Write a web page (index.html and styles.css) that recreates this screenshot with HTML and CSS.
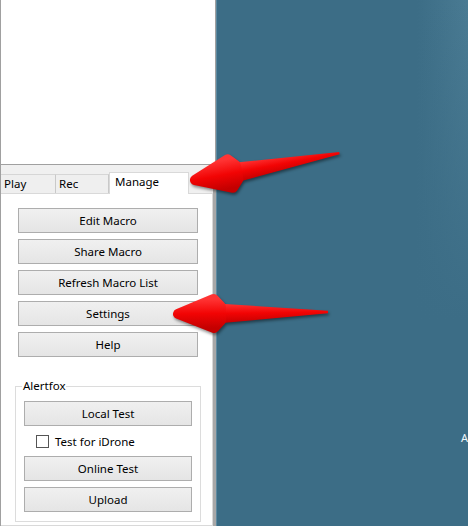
FILE: index.html
```html
<!DOCTYPE html>
<html>
<head>
<meta charset="utf-8">
<link rel="stylesheet" href="styles.css">
</head>
<body>
<div class="app">
  <div class="left">
    <div class="preview"></div>
    <div class="lower">
      <div class="tabs">
        <div class="tab tab-play">Play</div>
        <div class="tab tab-rec">Rec</div>
        <div class="tab tab-active">Manage</div>
      </div>
      <div class="panel">
        <div class="btn-list">
          <div class="btn">Edit Macro</div>
          <div class="btn">Share Macro</div>
          <div class="btn">Refresh Macro List</div>
          <div class="btn">Settings</div>
          <div class="btn">Help</div>
        </div>
        <div class="group">
          <div class="group-label">Alertfox</div>
          <div class="btn btn-inner">Local Test</div>
          <div class="check-row">
            <span class="checkbox"></span>
            <span>Test for iDrone</span>
          </div>
          <div class="btn btn-inner">Online Test</div>
          <div class="btn btn-inner">Upload</div>
        </div>
      </div>
    </div>
  </div>
  <div class="right">
    <span class="cut-text">A</span>
  </div>
</div>
<svg class="arrows" width="468" height="526" viewBox="0 0 468 526">
  <defs>
    <linearGradient id="red" x1="0" y1="0" x2="0" y2="1">
      <stop offset="0" stop-color="#ff3434"/>
      <stop offset="0.5" stop-color="#f20404"/>
      <stop offset="1" stop-color="#c40000"/>
    </linearGradient>
  </defs>
  <g transform="translate(190,181) rotate(-10.57)">
    <path d="M44,-10 L152,-1.2 L152,1.2 L44,10 Z" fill="url(#red)"/>
    <path d="M5,0 L41,-14.5 L48,-7 L48,7 L41,14.5 Z" fill="url(#red)" stroke="url(#red)" stroke-width="10" stroke-linejoin="round"/>
  </g>
  <g transform="translate(173,314) rotate(-0.74)">
    <path d="M44,-10 L155,-1.2 L155,1.2 L44,10 Z" fill="url(#red)"/>
    <path d="M5,0 L41,-14.5 L48,-7 L48,7 L41,14.5 Z" fill="url(#red)" stroke="url(#red)" stroke-width="10" stroke-linejoin="round"/>
  </g>
</svg>
</body>
</html>
```
FILE: styles.css
```css
* { box-sizing: border-box; }
html, body {
  margin: 0;
  padding: 0;
  width: 468px;
  height: 526px;
  overflow: hidden;
}
body {
  font-family: "Noto Sans", "Open Sans", sans-serif;
  font-size: 11.5px;
  color: #000;
  position: relative;
}
.app {
  display: flex;
  width: 468px;
  height: 526px;
}
.left {
  width: 216px;
  flex: none;
  display: flex;
  flex-direction: column;
}
.preview {
  height: 165px;
  background: #fff;
  border-left: 1px solid #a0a0a0;
  border-right: 1px solid #a0a0a0;
  border-bottom: 1px solid #a0a0a0;
}
.lower {
  flex: 1;
  background: #f0f0f0;
  border-left: 1px solid #a0a0a0;
  border-right: 3px solid #a8a8a8;
  padding-top: 7px;
  display: flex;
  flex-direction: column;
}
.tabs {
  display: flex;
  align-items: flex-end;
  height: 21px;
  position: relative;
  z-index: 1;
}
.tab {
  height: 19px;
  background: #efefef;
  border-top: 1px solid #d6d6d6;
  border-right: 1px solid #c9c9c9;
  padding: 1px 0 0 3px;
  line-height: 16px;
}
.tab-play { width: 55px; }
.tab-rec { width: 53px; }
.tab-active {
  width: 80px;
  height: 22px;
  margin-bottom: -1px;
  background: #fff;
  border: 1px solid #d9d9d9;
  border-bottom: none;
  padding: 0 0 0 5px;
  line-height: 18px;
}
.panel {
  flex: 1;
  background: #fff;
  border: 1px solid #d9d9d9;
  border-left: none;
  padding: 14px 0 0 17px;
  display: flex;
  flex-direction: column;
}
.btn-list {
  display: flex;
  flex-direction: column;
  gap: 6px;
}
.btn {
  width: 180px;
  height: 25px;
  border: 1px solid #adadad;
  background: linear-gradient(#f0f0f0, #e5e5e5);
  display: flex;
  align-items: center;
  justify-content: center;
  line-height: 16px;
}
.group {
  margin: 29px 0 0 -3px;
  width: 186px;
  border: 1px solid #dcdcdc;
  padding: 0 0 9px 8px;
  display: flex;
  flex-direction: column;
  gap: 6px;
}
.group-label {
  align-self: flex-start;
  margin: -9px 0 1px -2px;
  padding: 0 1px;
  background: #fff;
  line-height: 16px;
}
.btn-inner { width: 168px; }
.check-row {
  height: 18px;
  display: flex;
  align-items: center;
  padding-left: 12px;
  gap: 6px;
}
.checkbox {
  width: 13px;
  height: 13px;
  border: 1px solid #555;
  background: #fff;
}
.right {
  flex: 1;
  background:
    linear-gradient(to bottom, rgba(60,109,134,0) 0px, #3c6d86 320px),
    linear-gradient(to right, #3c6d86 200px, #4a7b93 252px);
  border-left: 1px solid #5f8aa0;
  overflow: hidden;
  padding: 430px 0 0 244px;
  white-space: nowrap;
}
.cut-text {
  color: #eef6fb;
  font-size: 11px;
  line-height: 12px;
}
.arrows {
  position: absolute;
  left: 0;
  top: 0;
  pointer-events: none;
  filter: drop-shadow(1px 2px 1.5px rgba(0,0,0,0.45));
}
```
